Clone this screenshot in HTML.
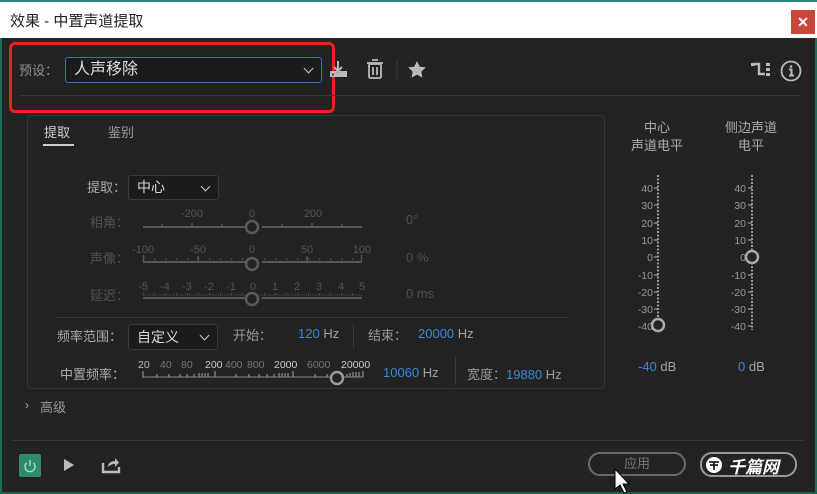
<!DOCTYPE html>
<html><head><meta charset="utf-8"><style>
*{margin:0;padding:0;box-sizing:border-box}
body{width:817px;height:494px;background:#232323;position:relative;overflow:hidden;font-family:"Liberation Sans","Noto Sans CJK SC",sans-serif;color:#a0a0a0}
.a{position:absolute;white-space:nowrap}
.t{font-size:13px;margin-top:-2px}
.dis{color:#505050}
.b{color:#3a86d8}
.dd{position:absolute;background:#1b1b1b;border:1px solid #3a3a3a;border-radius:3px;color:#d8d8d8;font-size:14px;padding-left:8px}
.dd:after{content:"";position:absolute;right:9px;top:7px;width:6px;height:6px;border-right:1.6px solid #ccc;border-bottom:1.6px solid #ccc;transform:rotate(45deg)}
</style></head><body>
<div class="a" style="left:0;top:0;width:817px;height:2px;background:#2a8a78"></div>
<div class="a" style="left:0;top:2px;width:817px;height:36px;background:#fff"></div>
<div class="a" style="left:10px;top:10px;font-size:15px;color:#222">效果 - 中置声道提取</div>
<div class="a" style="left:791px;top:10px;width:24px;height:24px;background:#c9463d;color:#fff;font-size:14px;text-align:center;line-height:24px;font-weight:bold">✕</div>
<div class="a" style="left:0;top:38px;width:2px;height:456px;background:#1e6e5c"></div>
<div class="a" style="left:815px;top:38px;width:2px;height:456px;background:#1e6e5c"></div>
<div class="a" style="left:0;top:492px;width:817px;height:2px;background:#1e5e50"></div>

<div class="a" style="left:9px;top:42px;width:326px;height:71px;border:3px solid #f0201c;border-radius:6px"></div>
<div class="a t" style="left:19px;top:62px;color:#909090">预设：</div>
<div class="dd" style="left:65px;top:57px;width:257px;height:26px;border-color:#3e6fb0;line-height:23px;font-size:16px;color:#ddd">人声移除</div>
<div class="a" style="left:19px;top:95px;width:782px;height:1px;background:#383838"></div>

<svg class="a" style="left:330px;top:55px" width="110" height="30">
<path d="M8 6v10M4 12l4 4 4-4" stroke="#bbb" stroke-width="2" fill="none"/>
<path d="M0 16h7l1 2 1-2h8v6H0z" fill="#bbb"/><circle cx="3" cy="19.5" r="1" fill="#232323"/>
<rect x="39" y="9" width="12" height="14" rx="1.5" fill="none" stroke="#bbb" stroke-width="1.8"/>
<path d="M37 8h16M42 5h6M43 12v8M47 12v8" stroke="#bbb" stroke-width="1.8" fill="none"/>
<line x1="67" y1="4" x2="67" y2="26" stroke="#3a3a3a"/>
<path d="M87 6l2.7 5.6 6.1.8-4.5 4.2 1.1 6-5.4-3-5.4 3 1.1-6-4.5-4.2 6.1-.8z" fill="#bbb"/>
</svg>
<svg class="a" style="left:750px;top:58px" width="55" height="26">
<path d="M3 6h6v10h6" stroke="#bbb" stroke-width="2.4" fill="none"/>
<rect x="1" y="5" width="4" height="3" fill="#bbb"/><rect x="16" y="5" width="4" height="3" fill="#bbb"/><rect x="16" y="10" width="4" height="3" fill="#bbb"/><rect x="16" y="15" width="4" height="3" fill="#bbb"/>
<circle cx="41" cy="13" r="9.5" fill="none" stroke="#bbb" stroke-width="1.8"/>
<circle cx="41" cy="8.5" r="1.3" fill="#bbb"/><path d="M39 11.5h2.5v6M39 17.5h5" stroke="#bbb" stroke-width="2" fill="none"/>
</svg>

<div class="a" style="left:27px;top:115px;width:578px;height:274px;border:1px solid #363636;border-radius:4px"></div>
<div class="a t" style="left:44px;top:124px;color:#d0d0d0">提取</div>
<div class="a" style="left:43px;top:144px;width:31px;height:2px;background:#ccc"></div>
<div class="a t" style="left:108px;top:124px;color:#999">鉴别</div>

<div class="a t" style="left:87px;top:179px;color:#aaa">提取：</div>
<div class="dd" style="left:128px;top:175px;width:91px;height:25px;line-height:23px;font-size:14px">中心</div>

<div class="a t dis" style="left:90px;top:214px">相角：</div>
<div class="a t dis" style="left:90px;top:250px">声像：</div>
<div class="a t dis" style="left:90px;top:287px">延迟：</div>
<div class="a t dis" style="left:406px;top:214px">0°</div>
<div class="a t dis" style="left:406px;top:252px">0 %</div>
<div class="a t dis" style="left:406px;top:288px">0 ms</div>

<svg class="a" style="left:130px;top:200px" width="250" height="110" font-family="Liberation Sans" font-size="11" fill="#555">
<g stroke="#555" stroke-width="2">
<line x1="13" y1="27" x2="116" y2="27"/><line x1="132" y1="27" x2="232" y2="27"/>
<path d="M32 27v-3M62 27v-4M92 27v-3M152 27v-3M182 27v-4M212 27v-3" stroke-width="1.5"/>
<line x1="13" y1="62" x2="116" y2="62"/><line x1="132" y1="62" x2="232" y2="62"/>
<line x1="13" y1="62" x2="232" y2="62" stroke-dasharray="1.5 9.5" stroke-width="6" transform="translate(0,-3)" opacity=".9" style="stroke-width:1.5"/>
<path d="M13.5 62v-7M68 62v-6M231.5 62v-7M177 62v-6" stroke-width="1.5"/>
<line x1="13" y1="98" x2="116" y2="98"/><line x1="132" y1="98" x2="232" y2="98"/>
<line x1="13" y1="95" x2="232" y2="95" stroke-width="1" stroke-dasharray="1 1.2"/>
<line x1="13" y1="94" x2="232" y2="94" stroke-width="1.2" stroke-dasharray="1.2 9.8"/>
</g>
<text x="62" y="17" text-anchor="middle">-200</text><text x="122" y="17" text-anchor="middle">0</text><text x="183" y="17" text-anchor="middle">200</text>
<text x="13" y="53" text-anchor="middle">-100</text><text x="68" y="53" text-anchor="middle">-50</text><text x="122" y="53" text-anchor="middle">0</text><text x="177" y="53" text-anchor="middle">50</text><text x="232" y="53" text-anchor="middle">100</text>
<g text-anchor="middle"><text x="13" y="90">-5</text><text x="35" y="90">-4</text><text x="57" y="90">-3</text><text x="79" y="90">-2</text><text x="101" y="90">-1</text><text x="123" y="90">0</text><text x="145" y="90">1</text><text x="167" y="90">2</text><text x="189" y="90">3</text><text x="211" y="90">4</text><text x="232" y="90">5</text></g>
<g fill="#232323" stroke="#5a5a5a" stroke-width="2.5"><circle cx="122" cy="27" r="6"/><circle cx="122" cy="64" r="6"/><circle cx="122" cy="99" r="6"/></g>
</svg>

<div class="a" style="left:55px;top:317px;width:513px;height:1px;background:#383838"></div>
<div class="a t" style="left:57px;top:328px;color:#aaa">频率范围：</div>
<div class="dd" style="left:128px;top:324px;width:90px;height:26px;line-height:24px">自定义</div>
<div class="a t" style="left:233px;top:327px;color:#999">开始：</div>
<div class="a t" style="left:298px;top:328px"><span class="b">120</span> Hz</div>
<div class="a" style="left:353px;top:324px;width:1px;height:25px;background:#3a3a3a"></div>
<div class="a t" style="left:368px;top:327px;color:#999">结束：</div>
<div class="a t" style="left:418px;top:328px"><span class="b">20000</span> Hz</div>

<div class="a t" style="left:60px;top:366px;color:#aaa">中置频率：</div>
<svg class="a" style="left:135px;top:355px" width="240" height="32" font-family="Liberation Sans" font-size="10.5">
<line x1="7" y1="22" x2="228" y2="22" stroke="#666" stroke-width="1.5"/>
<path d="M8 22v-6M22 22v-3M34 22v-3M45 22v-3M52 22v-3M59 22v-3M64 22v-4M67 22v-4M70 22v-4M73 22v-4M80 22v-6M101 22v-3M114 22v-3M124 22v-3M132 22v-3M139 22v-3M144 22v-4M147 22v-4M150 22v-4M153 22v-4M158 22v-6M180 22v-3M192 22v-3M212 22v-3M215 22v-4M218 22v-5M221 22v-5M224 22v-5M228 22v-6" stroke="#888" stroke-width="1.3"/>
<text x="3" y="13" fill="#bbb">20</text><text x="25" y="13" fill="#777">40</text><text x="46" y="13" fill="#777">80</text>
<text x="70" y="13" fill="#ccc">200</text><text x="90" y="13" fill="#777">400</text><text x="112" y="13" fill="#777">800</text><text x="139" y="13" fill="#ccc">2000</text><text x="172" y="13" fill="#777">6000</text><text x="206" y="13" fill="#ccc">20000</text>
<circle cx="202" cy="23" r="6" fill="#232323" stroke="#999" stroke-width="2.5"/>
</svg>
<div class="a t" style="left:383px;top:367px"><span class="b">10060</span> Hz</div>
<div class="a" style="left:455px;top:357px;width:1px;height:28px;background:#3a3a3a"></div>
<div class="a t" style="left:467px;top:366px;color:#999">宽度：<span class="b">19880</span> Hz</div>

<div class="a t" style="left:629px;top:121px;width:56px;text-align:center;line-height:18px;color:#aaa">中心<br>声道电平</div>
<div class="a t" style="left:720px;top:121px;width:62px;text-align:center;line-height:18px;color:#aaa">侧边声道<br>电平</div>
<svg class="a" style="left:620px;top:170px" width="170" height="180" font-family="Liberation Sans" font-size="10.5" fill="#999" text-anchor="end">
<line x1="38" y1="5" x2="38" y2="160" stroke="#999" stroke-width="2" stroke-dasharray="2 1.5"/>
<line x1="132" y1="5" x2="132" y2="160" stroke="#999" stroke-width="2" stroke-dasharray="2 1.5"/>
<g>
<text x="33" y="22">40</text><text x="33" y="39">30</text><text x="33" y="57">20</text><text x="33" y="74">10</text><text x="33" y="91">0</text><text x="33" y="109">-10</text><text x="33" y="126">-20</text><text x="33" y="143">-30</text><text x="33" y="160">-40</text>
<text x="126" y="22">40</text><text x="126" y="39">30</text><text x="126" y="57">20</text><text x="126" y="74">10</text><text x="126" y="91">0</text><text x="126" y="109">-10</text><text x="126" y="126">-20</text><text x="126" y="143">-30</text><text x="126" y="160">-40</text>
</g>
<path d="M34 18h4M34 35h4M34 53h4M34 70h4M34 87h4M34 105h4M34 122h4M34 139h4M128 18h4M128 35h4M128 53h4M128 70h4M128 87h4M128 105h4M128 122h4M128 139h4M128 156h4" stroke="#999" stroke-width="1.3"/>
<circle cx="38" cy="155" r="6" fill="#232323" stroke="#aaa" stroke-width="2.5"/>
<circle cx="132" cy="87" r="6" fill="#232323" stroke="#aaa" stroke-width="2.5"/>
</svg>
<div class="a t" style="left:638px;top:361px"><span class="b">-40</span> dB</div>
<div class="a t" style="left:738px;top:361px"><span class="b">0</span> dB</div>

<div class="a" style="left:25px;top:398px;font-size:12px;color:#aaa">›</div>
<div class="a t" style="left:40px;top:399px;color:#999">高级</div>
<div class="a" style="left:12px;top:440px;width:793px;height:1px;background:#383838"></div>

<div class="a" style="left:19px;top:454px;width:22px;height:23px;background:#2e8c6c;border-radius:2px"></div>
<svg class="a" style="left:19px;top:454px" width="22" height="23"><path d="M7.5 9a5 5 0 1 0 7 0" stroke="#9fd9c2" stroke-width="1.5" fill="none"/><line x1="11" y1="6" x2="11" y2="12" stroke="#9fd9c2" stroke-width="1.5"/></svg>
<svg class="a" style="left:60px;top:454px" width="70" height="22">
<path d="M4 5l10 6-10 6z" fill="#bbb"/>
<path d="M43 9v9h16v-5" stroke="#bbb" stroke-width="2.4" fill="none"/>
<path d="M48 13c0-4 3-6 7-6v-3l4 4.5-4 4.5v-3c-3 0-5 1-7 3z" fill="#bbb"/>
</svg>
<div class="a" style="left:588px;top:452px;width:98px;height:24px;border:2px solid #6a6a6a;border-radius:12px;text-align:center;line-height:20px;font-size:13px;color:#777">应用</div>
<svg class="a" style="left:613px;top:468px" width="18" height="26"><path d="M2 1v20l5-4 4 8 3-1-4-8h6z" fill="#fff" stroke="#000" stroke-width="1"/></svg>
<div class="a" style="left:700px;top:452px;width:97px;height:25px;border:2px solid #999;border-radius:12px"></div>
<svg class="a" style="left:705px;top:456px" width="20" height="18"><circle cx="9" cy="9" r="8" fill="#fff"/><path d="M4 6h10M9 6v8M5 9h8" stroke="#222" stroke-width="1.8"/></svg>
<div class="a" style="left:728px;top:453px;font-size:17px;font-weight:bold;font-style:italic;color:#fff">千篇网</div>
</body></html>
